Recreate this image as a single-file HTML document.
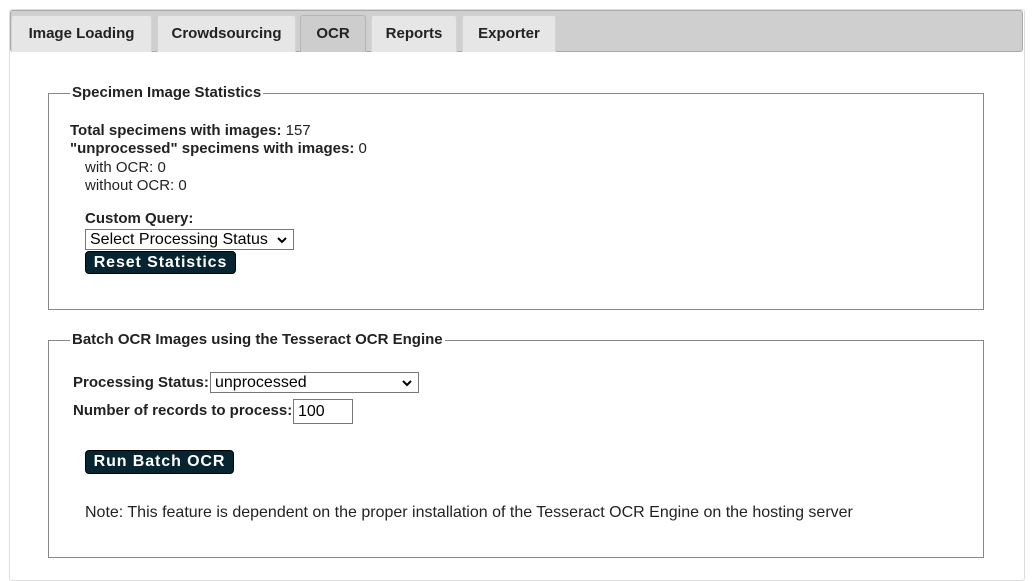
<html><head><style>
body{margin:0;width:1035px;height:571px;background:#fff;font-family:"Liberation Sans",Arial,sans-serif;color:#222;position:relative;overflow:hidden}
.a{position:absolute}
.wrap{left:9px;top:9px;width:1014px;height:570px;border:1px solid #ddd;border-radius:3px}
.bar{left:10px;top:10px;width:1013px;height:42px;background:#cfcfcf;border:1px solid #aaa;border-radius:3px;box-sizing:border-box}
.tab{top:15px;height:37px;background:#e6e6e6;border:1px solid #d3d3d3;border-bottom:none;border-radius:3px 3px 0 0;box-sizing:border-box;font-size:15px;font-weight:bold;line-height:36px;text-align:center;color:#222}
.fs{left:48px;width:936px;border:1px solid #888;box-sizing:border-box}
.lg{background:#fff;font-size:15px;font-weight:bold;padding:0 2px;color:#222}
.t{font-size:15px;line-height:18px;white-space:nowrap}
.btn{background:#062530;color:#fff;font-weight:bold;font-size:16px;letter-spacing:.9px;border-radius:4px;border:1px solid #000;box-sizing:border-box;text-align:center;line-height:21px;font-family:"Liberation Sans",Arial,sans-serif}
.sel{border:1px solid #777;box-sizing:border-box;background:#fff;font-size:16px;line-height:19px;padding-left:4px;color:#000}
.sel svg{position:absolute;right:6px;top:7px}
</style></head><body>
<div class="a wrap"></div>
<div class="a bar"></div>
<div class="a tab" style="left:11px;width:141px">Image Loading</div>
<div class="a tab" style="left:157px;width:139px">Crowdsourcing</div>
<div class="a tab" style="left:300px;width:66px;background:#cdcdcd;border-color:#b5b5b5">OCR</div>
<div class="a tab" style="left:371px;width:86px">Reports</div>
<div class="a tab" style="left:462px;width:94px">Exporter</div>

<div class="a fs" style="top:93px;height:217px"></div>
<div class="a lg" style="left:70px;top:84px">Specimen Image Statistics</div>
<div class="a t" style="left:70px;top:122px"><b>Total specimens with images:</b> 157</div>
<div class="a t" style="left:70px;top:140px"><b>"unprocessed" specimens with images:</b> 0</div>
<div class="a t" style="left:85px;top:159px">with OCR: 0</div>
<div class="a t" style="left:85px;top:177px">without OCR: 0</div>
<div class="a t" style="left:85px;top:210px;font-weight:bold">Custom Query:</div>
<div class="a sel" style="left:85px;top:229px;width:209px;height:21px">Select Processing Status<svg width="10" height="7"><path d="M1 1l4 4 4-4" stroke="#000" stroke-width="2" fill="none"/></svg></div>
<div class="a btn" style="left:85px;top:251px;width:151px;height:23px">Reset Statistics</div>

<div class="a fs" style="top:340px;height:218px"></div>
<div class="a lg" style="left:70px;top:331px">Batch OCR Images using the Tesseract OCR Engine</div>
<div class="a t" style="left:73px;top:374px;font-weight:bold">Processing Status:</div>
<div class="a sel" style="left:210px;top:372px;width:209px;height:21px">unprocessed<svg width="10" height="7"><path d="M1 1l4 4 4-4" stroke="#000" stroke-width="2" fill="none"/></svg></div>
<div class="a t" style="left:73px;top:402px;font-weight:bold">Number of records to process:</div>
<div class="a sel" style="left:293px;top:399px;width:60px;height:25px;line-height:23px">100</div>
<div class="a btn" style="left:85px;top:450px;width:149px;height:24px;line-height:22px">Run Batch OCR</div>
<div class="a t" style="left:85px;top:504px;font-size:16px">Note: This feature is dependent on the proper installation of the Tesseract OCR Engine on the hosting server</div>
</body></html>
